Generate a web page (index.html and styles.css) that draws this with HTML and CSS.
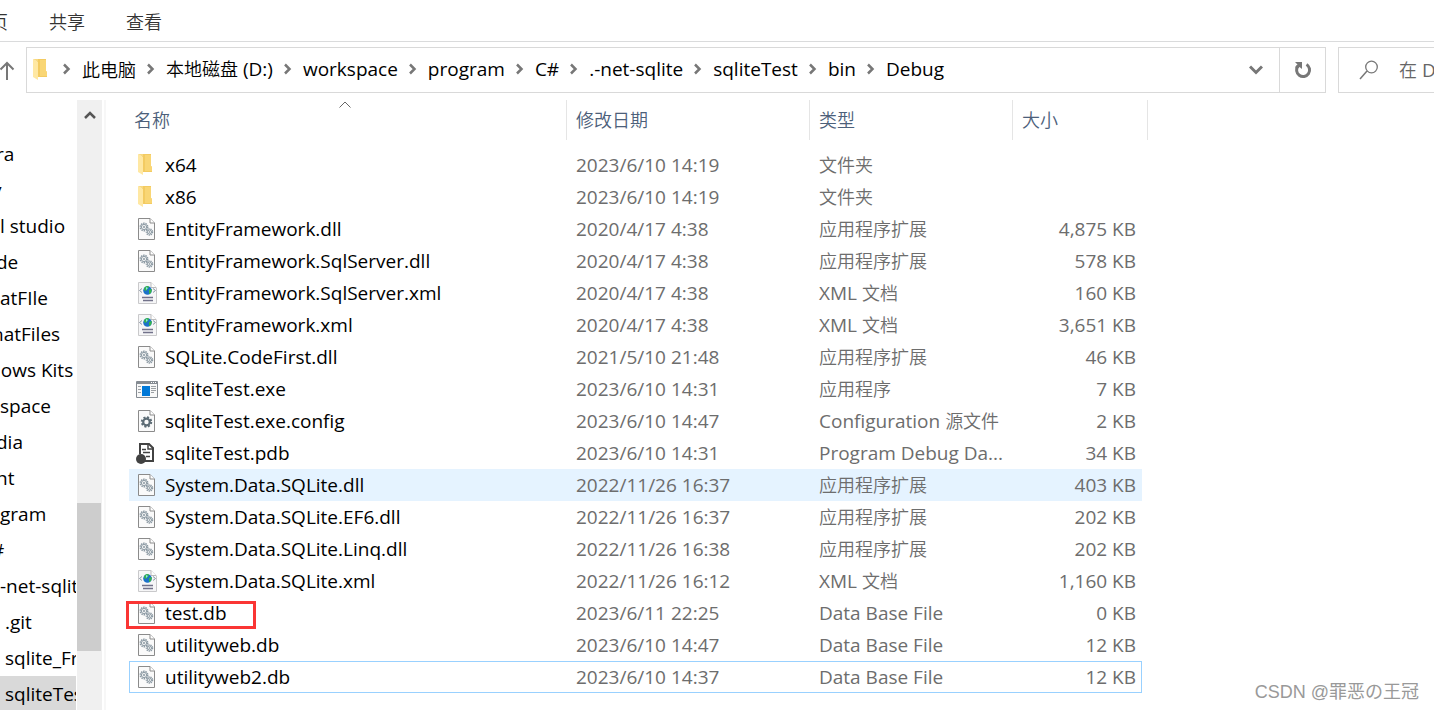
FILE: index.html
```
<!DOCTYPE html>
<html lang="zh-CN">
<head>
<meta charset="utf-8">
<title>Debug</title>
<link rel="stylesheet" href="styles.css">
</head>
<body>
<svg class="sprite" aria-hidden="true">
  <symbol id="folder" viewBox="0 0 22 22">
    <path d="M6 0H15V12L16 13V18H6Z" fill="#f3cb62"/>
    <path d="M9 1H15V12L16 13V17H9Z" fill="#f9d675"/>
    <path d="M2 0L7 3V21L2 18Z" fill="#ffe8a3"/>
    <path d="M2 0H7V3Z" fill="#f8d980"/>
  </symbol>
  <symbol id="page" viewBox="0 0 22 22">
    <path d="M2.500.5H14L18.500 5V21.500H2.500Z" fill="#fafafa" stroke="#8b8b8b"/>
    <path d="M14 .5V5H18.500" fill="#fff" stroke="#8b8b8b"/>
  </symbol>
  <symbol id="dll" viewBox="0 0 22 22">
    <use href="#page"/>
    <g fill="none" stroke="#8b99a3">
      <circle cx="8" cy="9" r="3.700" stroke-width="1.500" stroke-dasharray="1.500 .8"/>
      <circle cx="8" cy="9" r="2.600"/><circle cx="8" cy="9" r=".8"/>
      <circle cx="13.500" cy="14" r="3" stroke-width="1.500" stroke-dasharray="1.300 .8"/>
      <circle cx="13.500" cy="14" r="2"/><circle cx="13.500" cy="14" r=".5"/>
    </g>
  </symbol>
  <symbol id="xml" viewBox="0 0 22 22">
    <path d="M2.500.5H15L20.500 6V21.500H2.500Z" fill="#f6f6f7" stroke="#c9c9cb"/>
    <path d="M15 .5V5.500H20" fill="#fff" stroke="#bbb"/>
    <circle cx="11.500" cy="8.500" r="4.300" fill="#1c72c8"/>
    <path d="M9 5Q12 3 13 5L11 8L9 9L8 7ZM13 8L16 7L15 11L13 12Z" fill="#36b646"/>
    <path d="M10 5L12 6L10 8Z" fill="#8de1ef"/>
    <path d="M6 6.500L3.500 8.500L6 10.500M17 6.500L19.500 8.500L17 10.500" fill="none" stroke="#8995a5"/>
    <path d="M6 15.500H17M7 18.500H17" stroke="#72728a" stroke-width="1.500"/>
  </symbol>
  <symbol id="exe" viewBox="0 0 22 22">
    <path d="M.5 3.500H21.500V19.500H.5Z" fill="#f8f8f8" stroke="#858b92"/>
    <path d="M1 5H21" stroke="#858b92" stroke-width="2"/>
    <path d="M15 4.500H20" stroke="#fff" stroke-dasharray="1 1"/>
    <path d="M6 8H14V18H6Z" fill="#0078d7"/>
    <path d="M2 8.500H5M2 11.500H5M2 14.500H5M15 8.500H20M15 10.500H20M15 12.500H20M15 14.500H18" stroke="#9ca0a4"/>
  </symbol>
  <symbol id="config" viewBox="0 0 22 22">
    <use href="#page"/>
    <circle cx="10.500" cy="12" r="4.700" fill="none" stroke="#5d6c75" stroke-width="2" stroke-dasharray="2 1.690"/>
    <circle cx="10.500" cy="12" r="3.300" fill="none" stroke="#5d6c75" stroke-width="2.200"/>
  </symbol>
  <symbol id="pdb" viewBox="0 0 22 22">
    <path d="M4 12V2H13L17 6V19H8" fill="#fff" stroke="#424242" stroke-width="2"/>
    <path d="M12 2V7H17M6 7.500H10M7 10.500H14M10 14.500H14" fill="none" stroke="#424242" stroke-width="1.500"/>
    <circle cx="5" cy="17" r="5" fill="#424242"/>
  </symbol>
  <symbol id="chev" viewBox="0 0 8 12">
    <path d="M1 1.500L5.500 6L1 10.500" fill="none" stroke="#777" stroke-width="2.500"/>
  </symbol>
</svg>

<header class="tabs">
  <button>页</button><button>共享</button><button>查看</button>
</header>

<div class="toolbar">
  <button class="up" aria-label="上移">
    <svg viewBox="0 0 16 20" width="16" height="20"><path d="M7 20V3M.5 9.500L7 3L13.500 9.500" fill="none" stroke="#777" stroke-width="2"/></svg>
  </button>
  <div class="address">
    <svg class="icon"><use href="#folder"/></svg>
    <nav class="crumbs">
      <svg><use href="#chev"/></svg><a href="#" class="cjk">此电脑</a>
      <svg><use href="#chev"/></svg><a href="#"><span class="cjk">本地磁盘</span> (D:)</a>
      <svg><use href="#chev"/></svg><a href="#">workspace</a>
      <svg><use href="#chev"/></svg><a href="#">program</a>
      <svg><use href="#chev"/></svg><a href="#">C#</a>
      <svg><use href="#chev"/></svg><a href="#">.-net-sqlite</a>
      <svg><use href="#chev"/></svg><a href="#">sqliteTest</a>
      <svg><use href="#chev"/></svg><a href="#">bin</a>
      <svg><use href="#chev"/></svg><a href="#">Debug</a>
    </nav>
    <button class="drop" aria-label="历史记录">
      <svg viewBox="0 0 14 10" width="14" height="10"><path d="M1 1.500L7 7.500L13 1.500" fill="none" stroke="#777" stroke-width="3"/></svg>
    </button>
    <button class="refresh" aria-label="刷新">
      <svg viewBox="0 0 18 18" width="18" height="18"><path d="M12.500 3.500A6.500 6.500 0 1 1 4 5" fill="none" stroke="#777" stroke-width="3"/><path d="M1 1H8V8L5.500 6L3 8L1 6L3.500 3.500Z" fill="#777"/></svg>
    </button>
  </div>
  <button class="search">
    <svg viewBox="0 0 20 20" width="20" height="20"><path d="M1 19L8 11" stroke="#777" stroke-width="1.500"/><circle cx="12.500" cy="7" r="5.800" fill="none" stroke="#777" stroke-width="1.300"/></svg>
    <span><span class="cjk">在</span> D</span>
  </button>
</div>

<div class="main">
  <ul class="tree">
    <li class="trim">ra</li>
    <li class="cut">y</li>
    <li>l studio</li>
    <li class="trim">de</li>
    <li>atFIle</li>
    <li class="cut">hatFiles</li>
    <li class="trim">lows Kits</li>
    <li>space</li>
    <li class="trim">dia</li>
    <li class="trim">nt</li>
    <li>gram</li>
    <li class="cut">#</li>
    <li>-net-sqlit</li>
    <li class="deep">.git</li>
    <li class="deep">sqlite_Fr</li>
    <li class="deep current">sqliteTes</li>
  </ul>
  <div class="scroll">
    <button aria-label="向上滚动"><svg viewBox="0 0 12 10" width="12" height="10"><path d="M1 8L6 3L11 8" fill="none" stroke="#555" stroke-width="2.500"/></svg></button>
    <div class="thumb"></div>
  </div>
  <div class="files">
    <table>
      <colgroup><col class="c-name"><col class="c-date"><col class="c-type"><col class="c-size"><col class="c-end"></colgroup>
      <thead>
        <tr>
          <th><div>名称<svg class="sort" viewBox="0 0 12 7"><path d="M.5 6.500L6 1L11.500 6.500" fill="none" stroke="#666"/></svg></div></th>
          <th><div>修改日期</div></th><th><div>类型</div></th><th colspan="2"><div>大小</div></th>
        </tr>
      </thead>
      <tbody>
        <tr><td><svg><use href="#folder"/></svg>x64</td><td>2023/6/10 14:19</td><td class="cjk">文件夹</td><td></td></tr>
        <tr><td><svg><use href="#folder"/></svg>x86</td><td>2023/6/10 14:19</td><td class="cjk">文件夹</td><td></td></tr>
        <tr><td><svg><use href="#dll"/></svg>EntityFramework.dll</td><td>2020/4/17 4:38</td><td class="cjk">应用程序扩展</td><td>4,875 KB</td></tr>
        <tr><td><svg><use href="#dll"/></svg>EntityFramework.SqlServer.dll</td><td>2020/4/17 4:38</td><td class="cjk">应用程序扩展</td><td>578 KB</td></tr>
        <tr><td><svg><use href="#xml"/></svg>EntityFramework.SqlServer.xml</td><td>2020/4/17 4:38</td><td>XML <span class="cjk">文档</span></td><td>160 KB</td></tr>
        <tr><td><svg><use href="#xml"/></svg>EntityFramework.xml</td><td>2020/4/17 4:38</td><td>XML <span class="cjk">文档</span></td><td>3,651 KB</td></tr>
        <tr><td><svg><use href="#dll"/></svg>SQLite.CodeFirst.dll</td><td>2021/5/10 21:48</td><td class="cjk">应用程序扩展</td><td>46 KB</td></tr>
        <tr><td><svg><use href="#exe"/></svg>sqliteTest.exe</td><td>2023/6/10 14:31</td><td class="cjk">应用程序</td><td>7 KB</td></tr>
        <tr><td><svg><use href="#config"/></svg>sqliteTest.exe.config</td><td>2023/6/10 14:47</td><td>Configuration <span class="cjk">源文件</span></td><td>2 KB</td></tr>
        <tr><td><svg><use href="#pdb"/></svg>sqliteTest.pdb</td><td>2023/6/10 14:31</td><td>Program Debug Da...</td><td>34 KB</td></tr>
        <tr class="hover"><td><svg><use href="#dll"/></svg>System.Data.SQLite.dll</td><td>2022/11/26 16:37</td><td class="cjk">应用程序扩展</td><td>403 KB</td></tr>
        <tr><td><svg><use href="#dll"/></svg>System.Data.SQLite.EF6.dll</td><td>2022/11/26 16:37</td><td class="cjk">应用程序扩展</td><td>202 KB</td></tr>
        <tr><td><svg><use href="#dll"/></svg>System.Data.SQLite.Linq.dll</td><td>2022/11/26 16:38</td><td class="cjk">应用程序扩展</td><td>202 KB</td></tr>
        <tr><td><svg><use href="#xml"/></svg>System.Data.SQLite.xml</td><td>2022/11/26 16:12</td><td>XML <span class="cjk">文档</span></td><td>1,160 KB</td></tr>
        <tr><td><svg><use href="#dll"/></svg>test.db<span class="mark"></span></td><td>2023/6/11 22:25</td><td>Data Base File</td><td>0 KB</td></tr>
        <tr><td><svg><use href="#dll"/></svg>utilityweb.db</td><td>2023/6/10 14:47</td><td>Data Base File</td><td>12 KB</td></tr>
        <tr class="focus"><td><svg><use href="#dll"/></svg>utilityweb2.db</td><td>2023/6/10 14:37</td><td>Data Base File</td><td>12 KB</td></tr>
      </tbody>
    </table>
  </div>
</div>
<div class="watermark">CSDN @罪恶の王冠</div>
</body>
</html>
```
FILE: styles.css
```
* { box-sizing: border-box; }
body {
  margin: 0;
  height: 100vh;
  display: flex;
  flex-direction: column;
  overflow: hidden;
  position: relative;
  background: #fff;
  color: #000;
  font: 19px/30px "Open Sans", "Noto Sans CJK SC", sans-serif;
}
button { border: 0; padding: 0; background: none; font: inherit; color: inherit; }
a { color: inherit; text-decoration: none; }
svg { flex: none; display: block; }
.sprite { position: absolute; width: 0; height: 0; }
.cjk, .tabs, th { font-family: "Noto Sans CJK SC", sans-serif; font-size: 18px; font-weight: 350; }
span.cjk { line-height: 20px; }

.tabs {
  flex: none;
  height: 42px;
  display: flex;
  align-items: center;
  gap: 41px;
  border-bottom: 1px solid #dadbdc;
  color: #333;
}
.tabs button:first-child { margin-left: -10px; }

.toolbar { flex: none; display: flex; height: 58px; padding: 5px 0 7px; }
.up { width: 26px; display: flex; align-items: center; }
.address { flex: 1; display: flex; align-items: center; border: 1px solid #d9d9d9; }
.address .icon { width: 22px; height: 22px; margin-left: 4px; }
.crumbs { flex: 1; display: flex; align-items: center; margin-left: 10px; padding-bottom: 2px; }
.crumbs svg { width: 8px; height: 12px; margin-right: 11px; }
.crumbs a { margin-right: 11px; white-space: nowrap; }
.drop { width: 46px; height: 100%; display: grid; place-items: center; }
.refresh { width: 46px; height: 100%; display: grid; place-items: center; border-left: 1px solid #d9d9d9; }
.search {
  flex: none;
  width: 96px;
  margin-left: 12px;
  padding-left: 20px;
  display: flex;
  align-items: center;
  gap: 20px;
  border: 1px solid #d9d9d9;
  border-right: 0;
  color: #666;
  white-space: nowrap;
  overflow: hidden;
}

.main { flex: 1; min-height: 0; display: flex; }
.tree {
  flex: none;
  width: 77px;
  margin: 0;
  padding: 36px 0 0;
  list-style: none;
  overflow: hidden;
  line-height: 36px;
  white-space: nowrap;
}
.tree li { height: 36px; overflow: hidden; margin-right: 1px; }
.tree .deep { padding-left: 5px; }
.tree .trim { text-indent: -4px; }
.tree .cut { text-indent: -8px; }
.tree .current { background: #d9d9d9; }
.scroll { flex: none; width: 25px; background: #f0f0f0; }
.scroll button { width: 100%; height: 30px; display: grid; place-items: center; }
.thumb { width: 24px; height: 148px; margin-top: 373px; background: #cdcdcd; }

.files { flex: 1; margin-left: 2px; padding-left: 23px; border-left: 2px solid #f7f7f7; }
table { table-layout: fixed; width: 1019px; border-collapse: collapse; }
.c-name { width: 438px; }
.c-date { width: 243px; }
.c-type { width: 203px; }
.c-size { width: 129px; }
.c-end { width: 6px; }
th { padding: 0 0 9px; text-align: left; color: #4c607a; }
th div { position: relative; height: 40px; line-height: 38px; padding-left: 9px; border-right: 1px solid #e5e5e5; }
th:first-child div { padding-left: 5px; }
.sort { position: absolute; left: 210px; top: 1px; width: 12px; height: 7px; }
td { height: 32px; padding: 0 6px 0 9px; white-space: nowrap; color: #6d6d6d; }
td.cjk { padding-bottom: 2px; }
td:first-child { position: relative; display: flex; align-items: center; gap: 7px; padding-left: 7px; color: #000; }
td:nth-child(4) { text-align: right; }
td svg { width: 22px; height: 22px; }
.hover td { background: #e5f3ff; }
.focus td { box-shadow: inset 0 1px #99d1ff, inset 0 -1px #99d1ff; }
.focus td:first-child { box-shadow: inset 0 1px #99d1ff, inset 0 -1px #99d1ff, inset 1px 0 #99d1ff; }
.focus td:last-child { box-shadow: inset 0 1px #99d1ff, inset 0 -1px #99d1ff, inset -1px 0 #99d1ff; }
.mark { position: absolute; left: -3px; top: 4px; width: 130px; height: 28px; border: 3px solid #fa3534; }
.watermark {
  position: absolute;
  right: 15px;
  bottom: 2px;
  color: #999;
  font: 18px/32px "Liberation Sans", "Noto Sans CJK SC", sans-serif;
}
```
